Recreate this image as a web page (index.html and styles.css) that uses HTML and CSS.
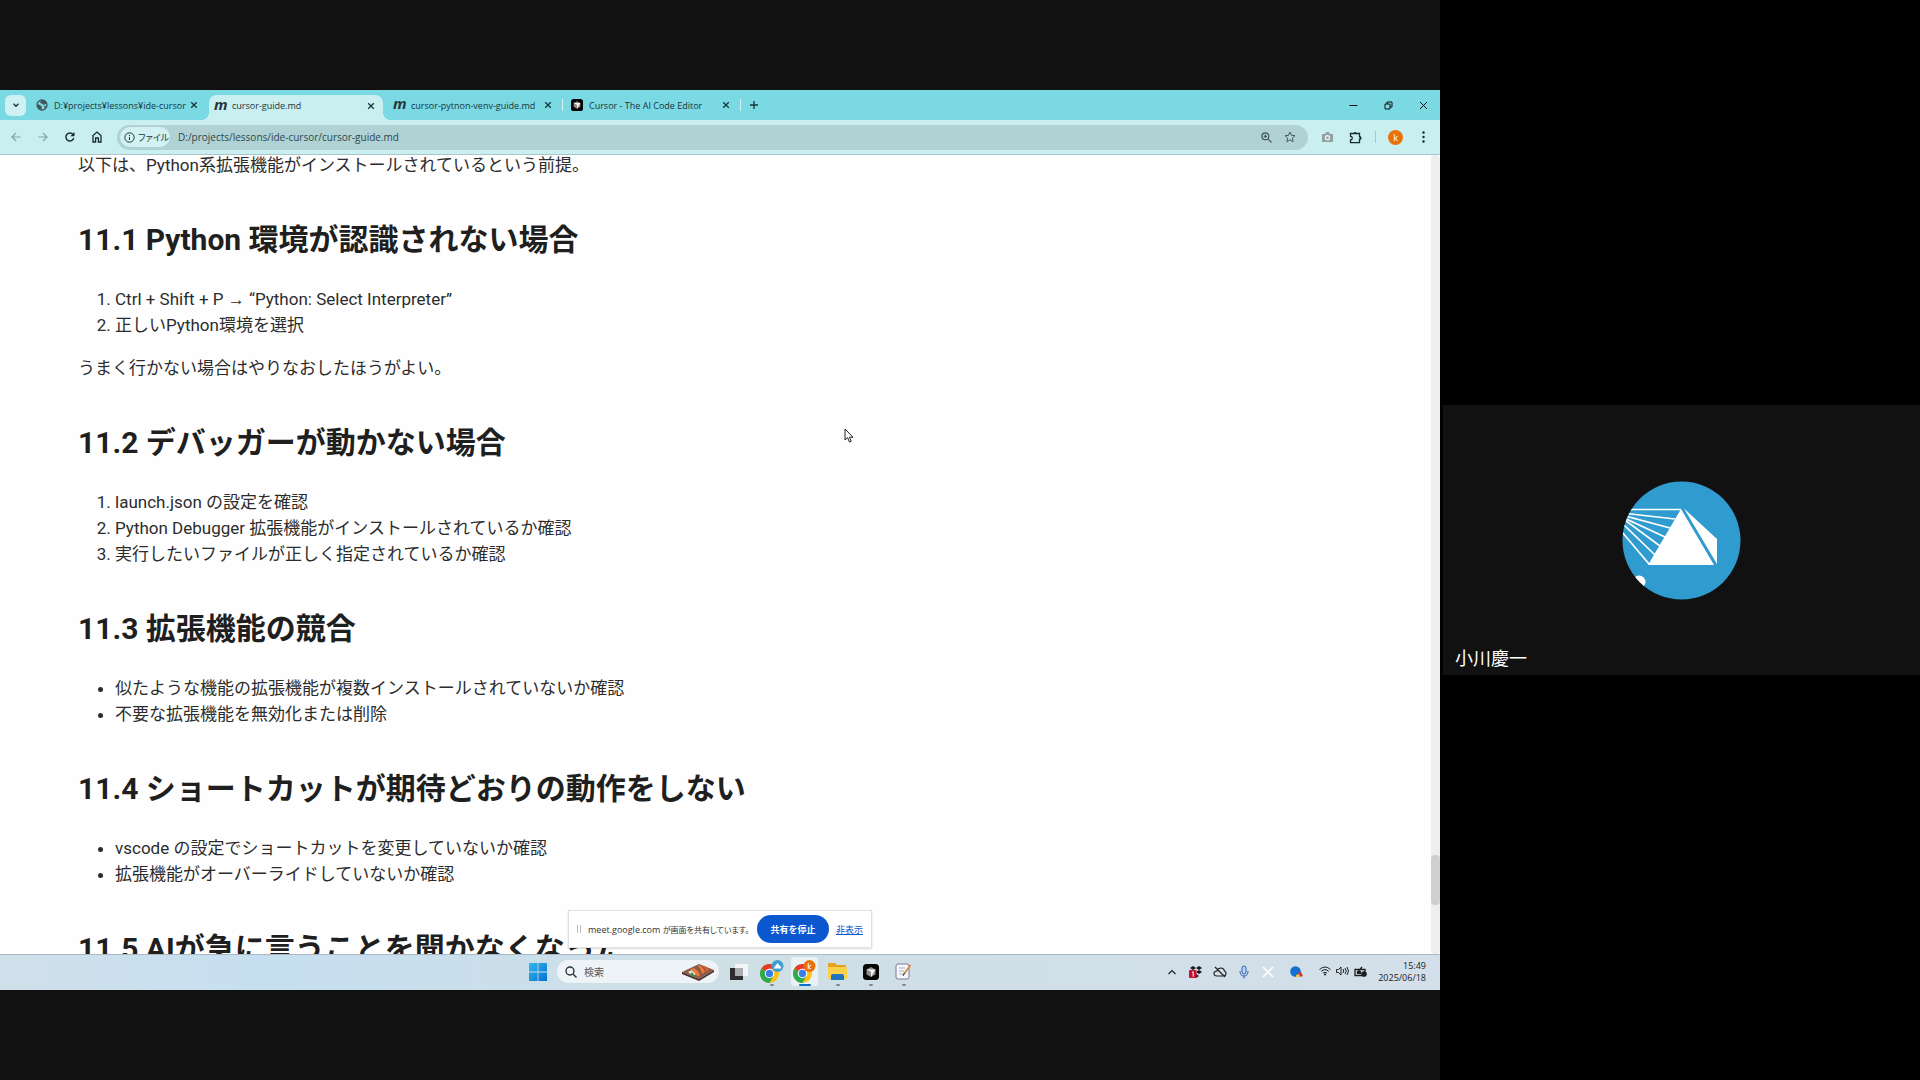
FILE: index.html
```html
<!DOCTYPE html>
<html lang="ja">
<head>
<meta charset="utf-8">
<title>cursor-guide.md</title>
<link rel="stylesheet" href="styles.css">
</head>
<body>
<svg width="0" height="0" class="defs" aria-hidden="true">
  <symbol id="close" viewBox="0 0 8 8"><path d="M1.2 1.2l5.6 5.6M6.8 1.2L1.2 6.8" stroke="#16363b" stroke-width="1.3" fill="none"/></symbol>
  <symbol id="chrome" viewBox="0 0 24 24"><circle cx="12" cy="12" r="12" fill="#fbc116"/><path d="M12 12L1.6 6A12 12 0 0 1 22.4 6z" fill="#e33b2e"/><path d="M12 12L1.6 6A12 12 0 0 0 12 24l5-9z" fill="#2da94f"/><path d="M12 6h10.4L17 15z" fill="#fbc116"/><circle cx="12" cy="12" r="6" fill="#fff"/><circle cx="12" cy="12" r="4.6" fill="#3b7de8"/></symbol>
  <symbol id="cursor-app" viewBox="0 0 16 16"><rect width="16" height="16" rx="3.5" fill="#050505"/><path d="M8 3l4.5 2.4v5L8 13l-4.500-2.600v-5z" fill="#8d8d8d"/><path d="M3.500 5.400h9L8 13V7.800z" fill="#f4f4f4"/></symbol>
</svg>
<main class="meeting">
  <section class="stage">
    <div class="desktop">
      <header class="tabs">
        <button class="tab-search" aria-label="タブを検索"><svg width="8" height="8" viewBox="0 0 8 8"><path d="M1.500 2.800L4 5.300l2.500-2.500" stroke="#16363b" stroke-width="1.400" fill="none"/></svg></button>
        <div class="tab tab-first">
          <svg width="12" height="12" viewBox="0 0 12 12"><circle cx="6" cy="6" r="5" fill="none" stroke="#41595c" stroke-width="1.300"/><path d="M1 5l3 1 2 2-1 3C2 10 1 8 1 5zM5 1l4 .5 1.500 3L8 6 6 4.500 4 4zM8 7l3 .3L9 10z" fill="#41595c"/></svg>
          <span class="tab-title">D:¥projects¥lessons¥ide-cursor</span>
          <button class="icon-btn" aria-label="閉じる"><svg width="8" height="8"><use href="#close"/></svg></button>
        </div>
        <div class="tab active">
          <span class="m-icon">m</span>
          <span class="tab-title">cursor-guide.md</span>
          <button class="icon-btn" aria-label="閉じる"><svg width="8" height="8"><use href="#close"/></svg></button>
        </div>
        <div class="tab ruled">
          <span class="m-icon">m</span>
          <span class="tab-title">cursor-pytnon-venv-guide.md</span>
          <button class="icon-btn" aria-label="閉じる"><svg width="8" height="8"><use href="#close"/></svg></button>
        </div>
        <div class="tab ruled">
          <svg width="12" height="12"><use href="#cursor-app"/></svg>
          <span class="tab-title">Cursor - The AI Code Editor</span>
          <button class="icon-btn" aria-label="閉じる"><svg width="8" height="8"><use href="#close"/></svg></button>
        </div>
        <button class="icon-btn new-tab" aria-label="新しいタブ"><svg width="8" height="8" viewBox="0 0 8 8"><path d="M4 0v8M0 4h8" stroke="#16363b" stroke-width="1.300"/></svg></button>
        <div class="controls">
          <button class="icon-btn" aria-label="最小化"><svg width="9" height="9" viewBox="0 0 9 9"><path d="M.5 4.500h8" stroke="#111"/></svg></button>
          <button class="icon-btn" aria-label="元に戻す"><svg width="9" height="9" viewBox="0 0 9 9"><path d="M1 3h5v5H1zM3 3V1h5v5H6" stroke="#111" fill="none"/></svg></button>
          <button class="icon-btn" aria-label="ウィンドウを閉じる"><svg width="9" height="9" viewBox="0 0 9 9"><path d="M1 1l7 7M8 1L1 8" stroke="#111"/></svg></button>
        </div>
      </header>
      <nav class="toolbar">
        <button class="icon-btn" aria-label="戻る"><svg width="10" height="10" viewBox="0 0 10 10"><path d="M9.500 5H1M5 1L1 5l4 4" stroke="#83a5a8" stroke-width="1.200" fill="none"/></svg></button>
        <button class="icon-btn" aria-label="進む"><svg width="10" height="10" viewBox="0 0 10 10"><path d="M.5 5H9M5 1l4 4-4 4" stroke="#83a5a8" stroke-width="1.200" fill="none"/></svg></button>
        <button class="icon-btn" aria-label="再読み込み"><svg width="10" height="10" viewBox="0 0 10 10"><path d="M8.800 6A4 4 0 1 1 8 2.400" stroke="#17292b" stroke-width="1.400" fill="none"/><path d="M9.500 0v4.200H5.300z" fill="#17292b"/></svg></button>
        <button class="icon-btn" aria-label="ホーム"><svg width="10" height="12" viewBox="0 0 10 12"><path d="M1 11V4.500l4-3.500 4 3.500V11H6.400V7H3.600v4z" stroke="#17292b" stroke-width="1.300" fill="none"/></svg></button>
        <div class="omnibox">
          <button class="chip"><svg width="11" height="11" viewBox="0 0 11 11"><circle cx="5.500" cy="5.500" r="4.700" fill="none" stroke="#17383c"/><path d="M5.500 5v3M5.500 2.800v1.200" stroke="#17383c"/></svg>ファイル</button>
          <input class="url" type="text" aria-label="アドレス" value="D:/projects/lessons/ide-cursor/cursor-guide.md">
          <button class="icon-btn" aria-label="ズーム"><svg width="11" height="11" viewBox="0 0 11 11"><circle cx="4.300" cy="4.300" r="3.500" fill="none" stroke="#47595b" stroke-width="1.200"/><path d="M7 7l3.500 3.500M2.600 4.300H6M4.300 2.600V6" stroke="#47595b" stroke-width="1.200"/></svg></button>
          <button class="icon-btn" aria-label="ブックマーク"><svg width="12" height="12" viewBox="0 0 12 12"><path d="M6 1l1.500 3.300 3.500.4-2.600 2.400.7 3.600L6 8.900l-3.100 1.800.7-3.600L1 4.700l3.500-.4z" stroke="#47595b" fill="none"/></svg></button>
        </div>
        <div class="extras">
          <button class="icon-btn" aria-label="キャプチャ"><svg width="11" height="10" viewBox="0 0 11 10"><path d="M0 2h3l1-2h3l1 2h3v8H0z" fill="#91a2a4"/><circle cx="5.500" cy="5.800" r="2.700" fill="#eaf6f6"/><circle cx="5.500" cy="5.800" r="1.400" fill="#91a2a4"/></svg></button>
          <button class="icon-btn" aria-label="拡張機能"><svg width="13" height="13" viewBox="0 0 13 13"><path d="M1.500 2.500h9v3.200a1.400 1.400 0 0 1 0 2.800v3.200h-9V9a1.800 1.800 0 0 0 0-3.600z" fill="none" stroke="#17292b" stroke-width="1.300"/><path d="M4.600 2.500a1.500 1.500 0 0 1 3 0zM10.500 5.600a1.500 1.500 0 0 1 0 3z" fill="#17292b"/></svg></button>
          <span class="bar"></span>
          <button class="profile">k</button>
          <button class="icon-btn" aria-label="メニュー"><svg width="3" height="12" viewBox="0 0 3 12"><g fill="#17292b"><circle cx="1.500" cy="1.500" r="1.200"/><circle cx="1.500" cy="6" r="1.200"/><circle cx="1.500" cy="10.500" r="1.200"/></g></svg></button>
        </div>
      </nav>
      <div class="viewport">
        <article class="doc">
          <p>以下は、Python系拡張機能がインストールされているという前提。</p>
          <h2>11.1 Python 環境が認識されない場合</h2>
          <ol><li>Ctrl + Shift + P <span class="arrow">→</span> “Python: Select Interpreter”</li><li>正しいPython環境を選択</li></ol>
          <p>うまく行かない場合はやりなおしたほうがよい。</p>
          <h2>11.2 デバッガーが動かない場合</h2>
          <ol><li>launch.json の設定を確認</li><li>Python Debugger 拡張機能がインストールされているか確認</li><li>実行したいファイルが正しく指定されているか確認</li></ol>
          <h2>11.3 拡張機能の競合</h2>
          <ul><li>似たような機能の拡張機能が複数インストールされていないか確認</li><li>不要な拡張機能を無効化または削除</li></ul>
          <h2>11.4 ショートカットが期待どおりの動作をしない</h2>
          <ul><li>vscode の設定でショートカットを変更していないか確認</li><li>拡張機能がオーバーライドしていないか確認</li></ul>
          <h2>11.5 AIが急に言うことを聞かなくなった</h2>
        </article>
        <div class="scrollbar"><div class="thumb"></div></div>
      </div>
      <footer class="taskbar">
        <div class="apps">
          <button class="app" aria-label="スタート"><svg width="18" height="18" viewBox="0 0 18 18"><defs><linearGradient id="win" x2="1" y2="1"><stop stop-color="#35b7ee"/><stop offset="1" stop-color="#0472cf"/></linearGradient></defs><path d="M0 0h8.600v8.600H0zM9.400 0H18v8.600H9.400zM0 9.400h8.600V18H0zM9.400 9.400H18V18H9.400z" fill="url(#win)"/></svg></button>
          <label class="search">
            <svg width="12" height="12" viewBox="0 0 12 12"><circle cx="5" cy="5" r="4" fill="none" stroke="#26343b" stroke-width="1.400"/><path d="M8 8l3.500 3.500" stroke="#26343b" stroke-width="1.400"/></svg>
            <input type="text" placeholder="検索" aria-label="検索">
            <svg width="32" height="18" viewBox="0 0 32 18"><path d="M0 9L17 1l15 6-15 9z" fill="#8a5c48"/><path d="M0 9l17 7 15-9v2l-15 9L0 11z" fill="#4b3029"/><path d="M6 9l6-3 4 4-5 3z" fill="#e9e4d6"/><path d="M8 7q5-5 10 5l-2 2Q10 6 8 7zM15 3q4-3 8 6l-3 2Q18 3 15 3z" fill="#f0783c"/><path d="M21 3q4 0 6 4l-3 2Q23 4 21 3z" fill="#df5c2c"/><path d="M8 12l2-3 3 4-2 1z" fill="#3f8d58"/></svg>
          </label>
          <button class="app" aria-label="タスクビュー"><svg width="18" height="16" viewBox="0 0 18 16"><path d="M5 0h13v12H5z" fill="#f3f5f6"/><path d="M0 4h13v12H0z" fill="#2b2d2f"/><path d="M5 4h8v8H5z" fill="#a9adb0"/></svg></button>
          <button class="app run" aria-label="Chrome"><svg width="24" height="24" viewBox="0 0 24 24"><use href="#chrome" y="4" width="19" height="19"/><circle cx="17.500" cy="6" r="6" fill="#3d9ed0"/><path d="M13.500 8.500L17.500 3l3.500 4v1.500z" fill="#fff"/></svg></button>
          <button class="app run current" aria-label="Chrome k"><svg width="24" height="24" viewBox="0 0 24 24"><use href="#chrome" y="4" width="19" height="19"/><circle cx="16.500" cy="6" r="6" fill="#e8710a"/><path d="M15.200 3v6M18 5l-2.800 2L18 9" stroke="#fff" fill="none"/></svg></button>
          <button class="app run" aria-label="エクスプローラー"><svg width="19" height="17" viewBox="0 0 19 17"><path d="M0 1q0-1 1-1h6l2 2h9v4H0z" fill="#e5a21c"/><path d="M0 4h18q1 0 1 1v11H0z" fill="#fbd04b"/><path d="M3 17v-4q0-2 2-2h9q2 0 2 2v4z" fill="#1c74bd"/></svg></button>
          <button class="app run" aria-label="Cursor"><svg width="16" height="16"><use href="#cursor-app"/></svg></button>
          <button class="app run" aria-label="メモ帳"><svg width="17" height="17" viewBox="0 0 17 17"><rect x="1" y="1" width="13" height="15" rx="2" fill="#f6f7fb" stroke="#777b94"/><path d="M4 5h6M4 8h5M4 11h5" stroke="#a7aec0"/><path d="M15.500 2L9 11" stroke="#d98a42" stroke-width="2"/><path d="M9.500 10L8 13" stroke="#333"/></svg></button>
        </div>
        <div class="tray">
          <svg width="10" height="10" viewBox="0 0 10 10"><path d="M1.500 7L5 3.500 8.500 7" stroke="#222" fill="none" stroke-width="1.200"/></svg>
          <svg width="14" height="14" viewBox="0 0 14 14"><path d="M4 1l3 2 3-2 3 2-3 2 3 2-3 2-3-2-3 2-3-2 3-2-3-2zM7 9l3 2-3 2z" fill="#15181b"/><path d="M7 3l3 2-3 2-3-2z" fill="#d3dfe8"/><rect y="5" width="7.500" height="8" rx="1" fill="#c8102e"/><path d="M3 7.500l1.200-.8v5" stroke="#fff" fill="none"/></svg>
          <svg width="14" height="12" viewBox="0 0 14 12"><path d="M4 10q-3 0-3-2.500T4 5q1-3 4-3t3.500 3Q13 5.500 13 7.500T11 10zM2 1l10 10" stroke="#222" fill="none" stroke-width="1.200"/></svg>
          <svg width="10" height="14" viewBox="0 0 10 14"><rect x="3" y="1" width="4" height="8" rx="2" fill="#bcd4f2" stroke="#2d62b5"/><path d="M1 6q0 5 4 5t4-5M5 11v2.500" stroke="#2d62b5" fill="none"/></svg>
          <svg width="12" height="12" viewBox="0 0 12 12"><path d="M1 1l10 10M11 1L1 11" stroke="#fff" stroke-width="1.600"/></svg>
          <svg width="13" height="12" viewBox="0 0 13 12"><circle cx="5.500" cy="5.500" r="5.300" fill="#146fd1"/><path d="M8 6h3l2 4-3 1z" fill="#c93a2e"/><path d="M6 9l3-1 1 3H6z" fill="#f3c14a"/></svg>
          <span class="system">
            <svg width="12" height="10" viewBox="0 0 12 10"><path d="M.5 3.500q5.500-5 11 0M2.200 5.400q3.800-3.500 7.600 0M4 7.200q2-1.800 4 0" stroke="#222" fill="none"/><circle cx="6" cy="8.600" r="1" fill="#222"/></svg>
            <svg width="13" height="10" viewBox="0 0 13 10"><path d="M.5 3.500h2L5 1v8L2.500 6.500h-2zM7 3q1.500 2 0 4M9 2q2.500 3 0 6M11 1q3 4 0 8" stroke="#222" fill="none"/></svg>
            <svg width="13" height="11" viewBox="0 0 13 11"><path d="M1 3.500h10v6H1zM3 7l5-6" stroke="#1d1d1d" fill="none" stroke-width="1.300"/><path d="M3 5h4v3H3z" fill="#1d1d1d"/><circle cx="10" cy="8" r="2.800" fill="#1d1d1d"/></svg>
          </span>
          <time class="clock">15:49<br>2025/06/18</time>
        </div>
      </footer>
      <div class="share">
        <span class="grip"></span>
        <span class="message">meet.google.com <span class="ja">が画面を共有しています。</span></span>
        <button class="stop">共有を停止</button>
        <a class="ja" href="#">非表示</a>
      </div>
      <svg class="pointer" width="10" height="15" viewBox="0 0 10 15"><path d="M1 1v11l2.600-2.400L5.400 14l1.800-.8-1.800-4H9z" fill="#fff" stroke="#222"/></svg>
    </div>
  </section>
  <aside class="people">
    <div class="tile">
      <svg class="avatar" width="119" height="119" viewBox="0 0 119 119">
        <clipPath id="round"><circle cx="59.500" cy="59.500" r="59"/></clipPath>
        <g clip-path="url(#round)"><rect width="119" height="119" fill="#2f9bce"/>
          <path d="M59 28.500H0M53 38L0 32M48 47L0 34M43 56L0 36M38 65L0 37M33 74L0 42M27 83L0 51" stroke="#fff" stroke-width="1.700" fill="none"/>
          <path d="M59 28L92 84H26zM62 27.500L95 58v25z" fill="#fff"/>
          <circle cx="17" cy="101" r="6.500" fill="#fff"/><path d="M11 96l10 10" stroke="#8f1d22" stroke-width="1.500"/></g>
      </svg>
      <span class="name">小川慶一</span>
    </div>
  </aside>
</main>
</body>
</html>
```
FILE: styles.css
```css
* { box-sizing: border-box; }
body { margin: 0; background: #000; }
button, input { font: inherit; color: inherit; border: 0; padding: 0; margin: 0; background: none; }
svg { display: block; flex: none; }
.defs { position: absolute; }

.meeting { display: grid; grid-template-columns: 3fr 1fr; min-height: 100vh; }
.stage { display: flex; flex-direction: column; justify-content: center; background: #111; }
.desktop {
  position: relative;
  display: flex;
  flex-direction: column;
  aspect-ratio: 16 / 10;
  overflow: hidden;
  background: #fefefe;
  font-family: "Open Sans", "Noto Sans CJK JP", sans-serif;
  font-size: 9px;
  color: #16363b;
}

.tabs { display: flex; align-items: center; height: 30px; padding: 0 9px 0 5px; background: #7bd9e4; }
.icon-btn { display: grid; place-items: center; width: 16px; height: 16px; flex: none; }
.tab-search { display: grid; place-items: center; width: 21px; height: 21px; border-radius: 6px; background: #d0f1f3; }
.tab { display: flex; align-items: center; width: 178px; height: 20px; padding: 0 6px 0 8px; }
.tab-first { margin-left: 2px; }
.tab-title { flex: 1; padding-left: 6px; white-space: nowrap; }
.active { position: relative; width: 174px; height: 25px; margin: 0 2px 0 3px; padding: 0 4px 4px 5px; align-self: flex-end; border-radius: 8px 8px 0 0; background: #c9eff1; }
.active::before, .active::after { content: ""; position: absolute; bottom: 0; width: 8px; height: 8px; }
.active::before { right: 100%; background: radial-gradient(circle at 0 0, transparent 8px, #c9eff1 8px); }
.active::after { left: 100%; background: radial-gradient(circle at 100% 0, transparent 8px, #c9eff1 8px); }
.ruled { height: 12px; border-right: 1px solid #d4f3f5; }
.m-icon { width: 12px; padding-bottom: 4px; font: italic 700 15px/16px "Noto Sans", sans-serif; color: #26363a; }
.new-tab { margin-left: 5px; }
.controls { display: flex; gap: 19px; margin-left: auto; }

.toolbar { display: flex; align-items: center; gap: 11px; height: 35px; padding: 0 9px 0 8px; background: #c9eff1; border-bottom: 1px solid #a9c6cb; }
.omnibox { display: flex; align-items: center; gap: 8px; flex: 1; height: 25px; margin-left: 1px; padding: 0 10px 0 3px; border-radius: 13px; background: #b1d2d5; }
.chip { display: flex; align-items: center; gap: 3px; width: 50px; height: 20px; padding-left: 4px; border-radius: 10px; background: #d2f1f2; white-space: nowrap; font-feature-settings: "palt"; }
.url { flex: 1; min-width: 0; font-size: 10px; color: #2c474b; }
.extras { display: flex; align-items: center; gap: 12px; }
.bar { width: 1px; height: 12px; background: #7bd9e4; }
.profile { width: 15px; height: 15px; border-radius: 50%; background: #e8710a; color: #fff; line-height: 15px; }

.viewport { display: flex; flex: 1; min-height: 0; overflow: hidden; }
.doc { flex: 1; margin-top: -3px; padding-left: 78px; font: 17px/26px Roboto, "Noto Sans CJK JP", sans-serif; color: #2c2c2c; }
.doc p, .doc ol, .doc ul { margin: 0; }
.doc ol, .doc ul { padding-left: 37px; }
.doc ol + p { margin-top: 17px; }
.doc h2 { margin: 39px 0 23px; font-size: 30px; line-height: 46px; font-weight: 700; color: #1f1f1f; }
.arrow { font-family: "Liberation Sans", sans-serif; line-height: 16px; }
.scrollbar { display: flex; flex-direction: column; justify-content: flex-end; width: 9px; padding-bottom: 49px; background: #eee; border-radius: 4px; }
.thumb { height: 50px; background: #cfcfcf; border-radius: 4px; }

.taskbar { display: flex; align-items: center; justify-content: space-between; height: 36px; flex: none; padding: 0 14px 2px 0; border-top: 1px solid #a9bac4; background: linear-gradient(90deg, #d0e0ea, #c6dff0 18%, #cfdfe6 50%, #d3dfea); color: #222; }
.apps { display: flex; align-items: center; gap: 6px; margin-left: 524px; }
.app { position: relative; display: grid; place-items: center; width: 27px; height: 29px; border-radius: 3px; }
.search { display: flex; align-items: center; gap: 7px; width: 162px; height: 23px; padding: 0 5px 0 8px; border-radius: 12px; background: #edf3f6; font-size: 10px; }
.search input { flex: 1; min-width: 0; }
.search input::placeholder { color: #555; opacity: 1; }
.run::after { content: ""; position: absolute; bottom: 0; left: 50%; width: 4px; height: 2px; margin-left: -2px; border-radius: 1px; background: #81898e; }
.current { background: #e9f1f5; }
.current::after { width: 12px; margin-left: -6px; background: #0b72c9; }
.tray { display: grid; grid-template-columns: repeat(5, 24px) 32px auto auto; place-items: center; }
.system { display: flex; gap: 5px; margin-left: 7px; }
.clock { margin-left: 11px; line-height: 12px; text-align: right; }

.share { position: absolute; left: 568px; bottom: 42px; display: flex; align-items: center; gap: 7px; width: 304px; height: 38px; padding: 0 8px; background: #fff; border: 1px solid #e1e1e1; box-shadow: 0 1px 2px #0002; color: #333; white-space: nowrap; }
.message { flex: 1; }
.ja { font-size: 8px; font-feature-settings: "palt"; }
.grip { width: 4px; height: 8px; border: solid #bbb; border-width: 0 1px; }
.stop { width: 72px; height: 28px; border-radius: 14px; background: #0b57d0; color: #fff; font-weight: 700; }
.share a { width: 27px; font-size: 9px; color: #0b57d0; }
.pointer { position: absolute; left: 844px; top: 338px; }

.people { display: flex; flex-direction: column; justify-content: center; padding-left: 3px; }
.tile { display: grid; place-items: center; position: relative; aspect-ratio: 477 / 270; background: #111; }
.name { position: absolute; left: 12px; bottom: 5px; font: 18px/26px "Noto Sans CJK JP", sans-serif; color: #fff; }
```
